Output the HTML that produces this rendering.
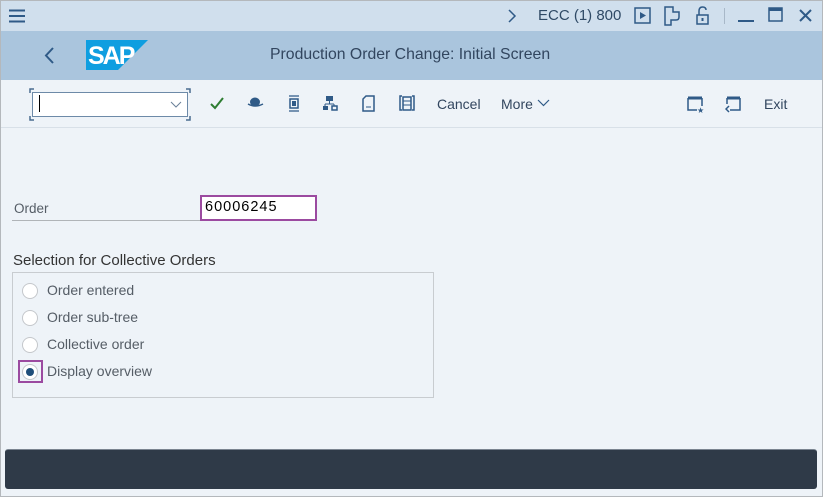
<!DOCTYPE html>
<html><head><meta charset="utf-8"><style>
*{margin:0;padding:0;box-sizing:border-box}
body{width:823px;height:497px;overflow:hidden;font-family:"Liberation Sans",sans-serif;background:#eef3f8;position:relative}
.frame{position:absolute;left:0;top:0;width:823px;height:497px;border:1px solid #b4b8bc}
.a{position:absolute}
.tb{left:1px;top:1px;width:821px;height:30px;background:#d0dfed}
.hd{left:1px;top:31px;width:821px;height:49px;background:#aac5dd}
.t{color:#32465f;font-size:15px}
.ic{stroke:#2f5a87;fill:none;stroke-width:1.5}
.rad{width:16px;height:16px;border-radius:50%;border:1px solid #c4c7cb;background:#fff}
.lbl{font-size:14px;color:#555d66}
</style></head><body>
<div class="a tb"></div>
<div class="a hd"></div>
<svg class="a" style="left:9px;top:9px" width="17" height="14"><path d="M0 1.5H16M0 7H16M0 12.5H16" stroke="#2f5a87" stroke-width="2"/></svg>
<svg class="a" style="left:507px;top:9px" width="10" height="14"><path d="M2 1L8 7L2 13" class="ic" stroke-width="1.2"/></svg>
<div class="a t" style="left:538px;top:7px;font-size:15px;color:#2f4a66">ECC (1) 800</div>
<svg class="a" style="left:634px;top:7px" width="18" height="18"><rect x="1" y="1" width="15" height="15" class="ic" stroke-width="1.3"/><path d="M6 5L12 8.5L6 12Z" fill="#2f5a87"/></svg>
<svg class="a" style="left:664px;top:6px" width="20" height="20"><path d="M1 1H9V6H15V11Q15 14 12 14H7V19H1Z" class="ic" stroke-width="1.4"/></svg>
<svg class="a" style="left:696px;top:6px" width="14" height="20"><rect x="1" y="9" width="11" height="9" class="ic" stroke-width="1.3"/><path d="M3 9V5Q3 1 6.5 1Q10 1 10 4" class="ic" stroke-width="1.3"/><rect x="5.5" y="12" width="2" height="3" fill="#2f5a87"/></svg>
<div class="a" style="left:724px;top:8px;width:1px;height:16px;background:#a8b8c8"></div>
<div class="a" style="left:738px;top:20px;width:16px;height:2px;background:#2f5a87"></div>
<svg class="a" style="left:768px;top:7px" width="16" height="16"><rect x="1" y="1" width="13" height="13" class="ic" stroke-width="1.6"/><path d="M1 2.5H14" stroke="#2f5a87" stroke-width="3"/></svg>
<svg class="a" style="left:799px;top:9px" width="14" height="14"><path d="M1 1L12 12M12 1L1 12" stroke="#2f5a87" stroke-width="2"/></svg>
<svg class="a" style="left:44px;top:47px" width="12" height="18"><path d="M9 1L2 8.5L9 16" stroke="#2f5a87" stroke-width="2" fill="none"/></svg>
<svg class="a" style="left:86px;top:40px" width="62" height="30"><path d="M0 0H62L32 30H0Z" fill="#0f9ee0"/><text x="2" y="24" font-family="Liberation Sans" font-weight="bold" font-size="25" fill="#fff" letter-spacing="-2">SAP</text></svg>
<div class="a t" style="left:270px;top:46px;font-size:15.8px">Production Order Change: Initial Screen</div>
<div class="a" style="left:1px;top:127px;width:821px;height:1px;background:#d8e0e8"></div>
<div class="a" style="left:32px;top:92px;width:156px;height:25px;background:#fff;border:1px solid #6d8aa8"></div>
<svg class="a" style="left:29px;top:88px" width="162" height="33"><path d="M1 5V1H5M157 1H161V5M161 28V32H157M5 32H1V28" stroke="#4a6c90" stroke-width="1.5" fill="none"/></svg>
<div class="a" style="left:39px;top:95px;width:1px;height:17px;background:#000"></div>
<svg class="a" style="left:170px;top:101px" width="12" height="7"><path d="M1 1L6 6L11 1" stroke="#6a8099" fill="none"/></svg>
<svg class="a" style="left:210px;top:97px" width="14" height="13"><path d="M1 7L5 11L13 1" stroke="#2e7d32" stroke-width="2" fill="none"/></svg>
<svg class="a" style="left:247px;top:97px" width="17" height="11"><ellipse cx="8" cy="5" rx="5" ry="4.5" fill="#2f5a87"/><path d="M1 7Q8 11 16 7" stroke="#2f5a87" stroke-width="1.5" fill="none"/></svg>
<svg class="a" style="left:288px;top:95px" width="12" height="17"><path d="M1 1H11M1 16H11" stroke="#2f5a87" stroke-width="1.2"/><rect x="2" y="4" width="8" height="9" class="ic" stroke-width="1.2"/><rect x="4" y="6" width="4" height="5" fill="#2f5a87"/></svg>
<svg class="a" style="left:322px;top:95px" width="16" height="16"><rect x="4" y="1" width="7" height="5" fill="#2f5a87"/><path d="M7.5 6V9M3 9H12M3 9V11M12 9V11" stroke="#2f5a87"/><rect x="1" y="11" width="5" height="4" fill="#2f5a87"/><rect x="10" y="11" width="5" height="4" class="ic" stroke-width="1"/></svg>
<svg class="a" style="left:362px;top:95px" width="13" height="17"><path d="M4 1H12V16H1V4Z" class="ic" stroke-width="1.2"/><path d="M4 12H9" stroke="#2f5a87"/></svg>
<svg class="a" style="left:399px;top:95px" width="16" height="17"><path d="M3 1H1V15H3M13 1H15V15H13" class="ic" stroke-width="1.2"/><rect x="4" y="2" width="8" height="13" class="ic" stroke-width="1.2"/><path d="M4 6H12M4 10H12" stroke="#2f5a87"/></svg>
<div class="a t" style="left:437px;top:96px;font-size:14px">Cancel</div>
<div class="a t" style="left:501px;top:96px;font-size:14px">More</div>
<svg class="a" style="left:537px;top:99px" width="13" height="8"><path d="M1 1L6.5 6.5L12 1" stroke="#2f5a87" stroke-width="1.2" fill="none"/></svg>
<svg class="a" style="left:687px;top:96px" width="17" height="17"><path d="M1 2H15" stroke="#2f5a87" stroke-width="3"/><path d="M1 2V14H10M15 2V10" class="ic" stroke-width="1.2"/><text x="10" y="17" font-size="8" fill="#2f5a87">★</text></svg>
<svg class="a" style="left:725px;top:96px" width="17" height="17"><path d="M2 2H15" stroke="#2f5a87" stroke-width="3"/><path d="M5 14H15V2M2 2V8" class="ic" stroke-width="1.2"/><path d="M4 10L1 13L4 16" class="ic" stroke-width="1"/></svg>
<div class="a t" style="left:764px;top:96px;font-size:14px">Exit</div>
<div class="a lbl" style="left:14px;top:201px;font-size:13.5px">Order</div>
<div class="a" style="left:12px;top:220px;width:190px;height:1px;background:#b0b4b8"></div>
<div class="a" style="left:200px;top:195px;width:117px;height:26px;background:#fff;border:2px solid #9b4aa0"></div>
<div class="a" style="left:205px;top:199px;font-size:14.5px;letter-spacing:1px;color:#000">60006245</div>
<div class="a" style="left:13px;top:252px;font-size:15px;color:#333">Selection for Collective Orders</div>
<div class="a" style="left:12px;top:272px;width:422px;height:126px;border:1px solid #c8ccd0"></div>
<div class="a rad" style="left:22px;top:283px"></div>
<div class="a lbl" style="left:47px;top:282px">Order entered</div>
<div class="a rad" style="left:22px;top:310px"></div>
<div class="a lbl" style="left:47px;top:309px">Order sub-tree</div>
<div class="a rad" style="left:22px;top:337px"></div>
<div class="a lbl" style="left:47px;top:336px">Collective order</div>
<div class="a" style="left:18px;top:360px;width:25px;height:23px;border:2px solid #9b4aa0"></div>
<div class="a rad" style="left:22px;top:364px"></div>
<div class="a" style="left:26px;top:368px;width:8px;height:8px;border-radius:50%;background:#1f4e7a"></div>
<div class="a lbl" style="left:47px;top:363px">Display overview</div>
<div class="a" style="left:5px;top:449px;width:812px;height:40px;background:#2f3a48;border-radius:3px;border-top:1px solid #7a8490"></div>
<div class="frame"></div>
</body></html>
